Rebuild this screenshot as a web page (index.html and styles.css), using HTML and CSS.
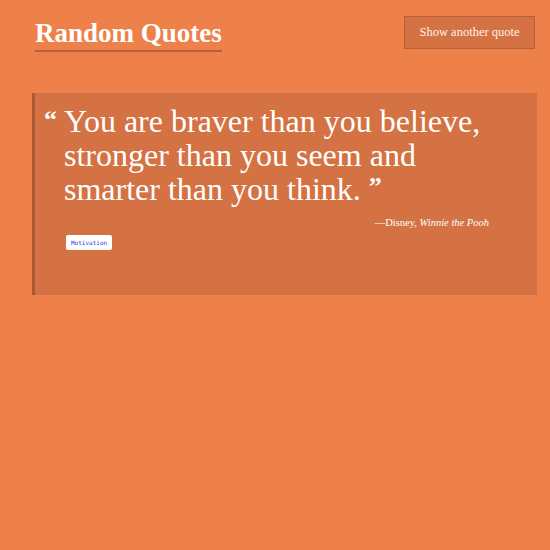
FILE: index.html
```html
<!DOCTYPE html>
<html>
<head>
<meta charset="utf-8">
<link rel="stylesheet" href="styles.css">
</head>
<body>
<header class="top">
  <h1 class="title">Random Quotes</h1>
  <button class="btn">Show another quote</button>
</header>
<main class="card">
  <blockquote class="quote">
    <span class="mark open">&#8220;</span>
    <p class="text">You are braver than you believe, stronger than you seem and smarter than you think. <span class="mark close">&#8221;</span></p>
  </blockquote>
  <p class="cite">&mdash;Disney, <em>Winnie the Pooh</em></p>
  <div class="tags"><span class="tag">Motivation</span></div>
</main>
</body>
</html>
```
FILE: styles.css
```css
html, body { margin: 0; padding: 0; }
body {
  background: #ee8049;
  font-family: "Liberation Serif", "DejaVu Serif", serif;
  color: #fff;
  width: 550px;
  height: 550px;
}
.top {
  display: flex;
  justify-content: space-between;
  align-items: flex-start;
  padding: 16px 15px 0 35px;
}
.title {
  margin: 0;
  font-size: 27px;
  font-weight: bold;
  line-height: 34px;
  border-bottom: 2px solid #b5603a;
  padding-bottom: 0;
}
.btn {
  background: #d57243;
  border: 1px solid #b5603a;
  color: #fdf3ec;
  font-family: inherit;
  font-size: 12.5px;
  width: 131px;
  height: 33px;
  padding: 0;
}
.card {
  margin: 41px 13px 0 32px;
  background: #d57243;
  border-left: 3px solid #a95a33;
  height: 202px;
  box-sizing: border-box;
  padding: 11px 0 0 9px;
}
.quote {
  margin: 0;
  display: flex;
  gap: 7px;
}
.mark {
  font-size: 26px;
  line-height: 32px;
  font-weight: bold;
}
.close { display: inline-block; vertical-align: top; line-height: 20px; height: 20px; margin-top: 5px; }
.text {
  margin: 0;
  font-size: 32px;
  line-height: 34px;
  width: 440px;
}
.cite {
  margin: 11px 0 0 0;
  font-size: 10.5px;
  text-align: right;
  padding-right: 48px;
}
.tags { padding: 3px 0 0 22px; }
.tag {
  display: inline-block;
  background: #fff;
  color: #3a3ae0;
  font-family: "DejaVu Sans Mono", monospace;
  font-size: 6px;
  padding: 4px 5px;
  border-radius: 2px;
  line-height: 7px;
}
```
